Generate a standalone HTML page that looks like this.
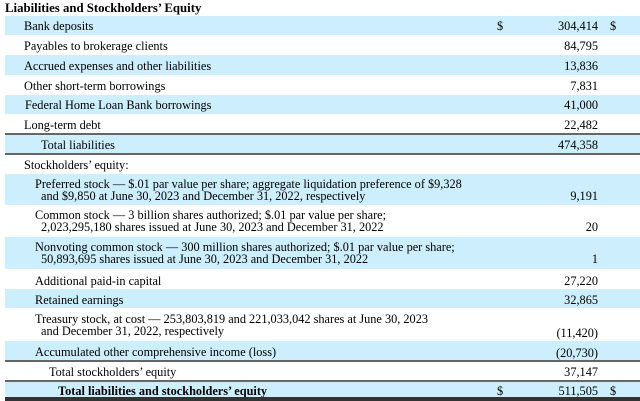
<!DOCTYPE html>
<html><head><style>
body{margin:0;width:640px;height:401px;background:#fff;font-family:"Liberation Serif",serif;font-size:12.3px;color:#000;position:relative;overflow:hidden}
.r{position:absolute;left:5px;width:635px}
.b{background:#cdeefc}
.t{position:absolute;white-space:nowrap;line-height:12px}
.n{position:absolute;right:42px;white-space:nowrap;line-height:12px}
.d1{position:absolute;left:497px;line-height:12px}
.d2{position:absolute;left:610px;line-height:12px}
.l{position:absolute;left:5px;width:635px;height:2px;background:#666}
</style></head><body>
<div class="t" style="left:5px;top:2px;font-weight:bold;font-size:12.8px">Liabilities and Stockholders’ Equity</div>

<div class="r b" style="top:16px;height:19px"></div>
<div class="t" style="left:24px;top:20px">Bank deposits</div><div class="d1" style="top:20px">$</div><div class="n" style="top:20px">304,414</div><div class="d2" style="top:20px">$</div>

<div class="t" style="left:24px;top:40px">Payables to brokerage clients</div><div class="n" style="top:40px">84,795</div>

<div class="r b" style="top:55px;height:20px"></div>
<div class="t" style="left:24px;top:60px">Accrued expenses and other liabilities</div><div class="n" style="top:60px">13,836</div>

<div class="t" style="left:24px;top:80px">Other short-term borrowings</div><div class="n" style="top:80px">7,831</div>

<div class="r b" style="top:95px;height:19px"></div>
<div class="t" style="left:25px;top:99px">Federal Home Loan Bank borrowings</div><div class="n" style="top:99px">41,000</div>

<div class="t" style="left:24px;top:119px">Long-term debt</div><div class="n" style="top:119px">22,482</div>

<div class="l" style="top:133px"></div>
<div class="r b" style="top:135px;height:19px"></div>
<div class="t" style="left:41px;top:139px">Total liabilities</div><div class="n" style="top:139px">474,358</div>
<div class="l" style="top:153px"></div>

<div class="t" style="left:24px;top:159px">Stockholders’ equity:</div>

<div class="r b" style="top:174px;height:31px"></div>
<div class="t" style="left:35px;top:178px">Preferred stock — $.01 par value per share; aggregate liquidation preference of $9,328</div>
<div class="t" style="left:41px;top:190px">and $9,850 at June 30, 2023 and December 31, 2022, respectively</div><div class="n" style="top:190px">9,191</div>

<div class="t" style="left:35px;top:209px">Common stock — 3 billion shares authorized; $.01 par value per share;</div>
<div class="t" style="left:41px;top:221px">2,023,295,180 shares issued at June 30, 2023 and December 31, 2022</div><div class="n" style="top:221px">20</div>

<div class="r b" style="top:237px;height:32px"></div>
<div class="t" style="left:35px;top:241px">Nonvoting common stock — 300 million shares authorized; $.01 par value per share;</div>
<div class="t" style="left:41px;top:253px">50,893,695 shares issued at June 30, 2023 and December 31, 2022</div><div class="n" style="top:253px">1</div>

<div class="t" style="left:35px;top:275px">Additional paid-in capital</div><div class="n" style="top:275px">27,220</div>

<div class="r b" style="top:289px;height:19px"></div>
<div class="t" style="left:35px;top:294px">Retained earnings</div><div class="n" style="top:294px">32,865</div>

<div class="t" style="left:35px;top:313px">Treasury stock, at cost — 253,803,819 and 221,033,042 shares at June 30, 2023</div>
<div class="t" style="left:41px;top:325px">and December 31, 2022, respectively</div><div class="n" style="top:327px">(11,420)</div>

<div class="r b" style="top:341px;height:20px"></div>
<div class="t" style="left:35px;top:346px">Accumulated other comprehensive income (loss)</div><div class="n" style="top:347px">(20,730)</div>
<div class="l" style="top:360px"></div>

<div class="t" style="left:49px;top:366px">Total stockholders’ equity</div><div class="n" style="top:366px">37,147</div>

<div class="l" style="top:380px"></div>
<div class="r b" style="top:382px;height:15px"></div>
<div class="t" style="left:58px;top:385px;font-weight:bold">Total liabilities and stockholders’ equity</div><div class="d1" style="top:385px">$</div><div class="n" style="top:385px">511,505</div><div class="d2" style="top:385px">$</div>
<div class="l" style="top:397px;height:4px;background:#333"></div>
</body></html>
